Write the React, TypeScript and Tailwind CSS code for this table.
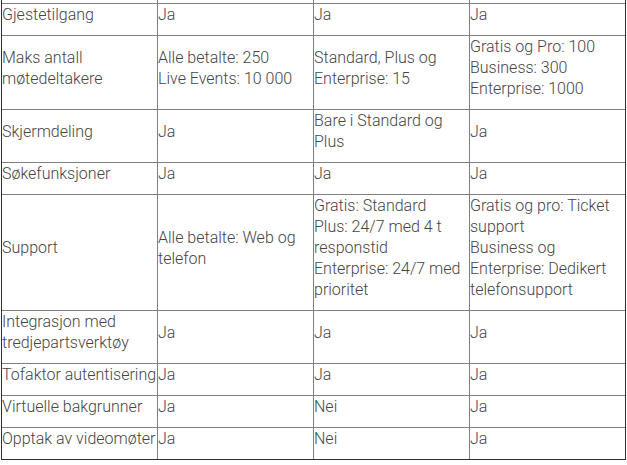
const rows: string[][][] = [
  [["Gjestetilgang"], ["Ja"], ["Ja"], ["Ja"]],
  [
    ["Maks antall møtedeltakere"],
    ["Alle betalte: 250", "Live Events: 10 000"],
    ["Standard, Plus og Enterprise: 15"],
    ["Gratis og Pro: 100", "Business: 300", "Enterprise: 1000"],
  ],
  [["Skjermdeling"], ["Ja"], ["Bare i Standard og Plus"], ["Ja"]],
  [["Søkefunksjoner"], ["Ja"], ["Ja"], ["Ja"]],
  [
    ["Support"],
    ["Alle betalte: Web og telefon"],
    ["Gratis: Standard", "Plus: 24/7 med 4 t responstid", "Enterprise: 24/7 med prioritet"],
    ["Gratis og pro: Ticket support", "Business og Enterprise: Dedikert telefonsupport"],
  ],
  [["Integrasjon med tredjepartsverktøy"], ["Ja"], ["Ja"], ["Ja"]],
  [["Tofaktor autentisering"], ["Ja"], ["Ja"], ["Ja"]],
  [["Virtuelle bakgrunner"], ["Ja"], ["Nei"], ["Ja"]],
  [["Opptak av videomøter"], ["Ja"], ["Nei"], ["Ja"]],
]

export default function App() {
  return (
    <div className="w-[627px] h-[465px] bg-white overflow-hidden">
      <div
        className="ml-px w-[625px] border-l border-r border-b border-[#2f2f2f] text-[16px] leading-[21px] font-light text-[#454545]"
        style={{ fontFamily: "Roboto, 'Liberation Sans', sans-serif" }}
      >
        {/* tail of the row above, cut off by the screenshot */}
        <div className="grid grid-cols-[155px_156px_156px_156px] h-[3px]">
          <div />
          <div className="border-l border-[#808080]" />
          <div className="border-l border-[#808080]" />
          <div className="border-l border-[#808080]" />
        </div>
        {rows.map((row, i) => (
          <div key={i} className="grid grid-cols-[155px_156px_156px_156px] border-t border-[#808080]">
            {row.map((lines, j) => (
              <div
                key={j}
                className={
                  j === 0
                    ? "flex flex-col justify-center pb-[10px] whitespace-nowrap"
                    : "flex flex-col justify-center pb-[10px] border-l border-[#808080]"
                }
              >
                {lines.map((l, k) => (
                  <div key={k} className={j === 0 ? "whitespace-normal" : ""}>
                    {l}
                  </div>
                ))}
              </div>
            ))}
          </div>
        ))}
      </div>
    </div>
  )
}
